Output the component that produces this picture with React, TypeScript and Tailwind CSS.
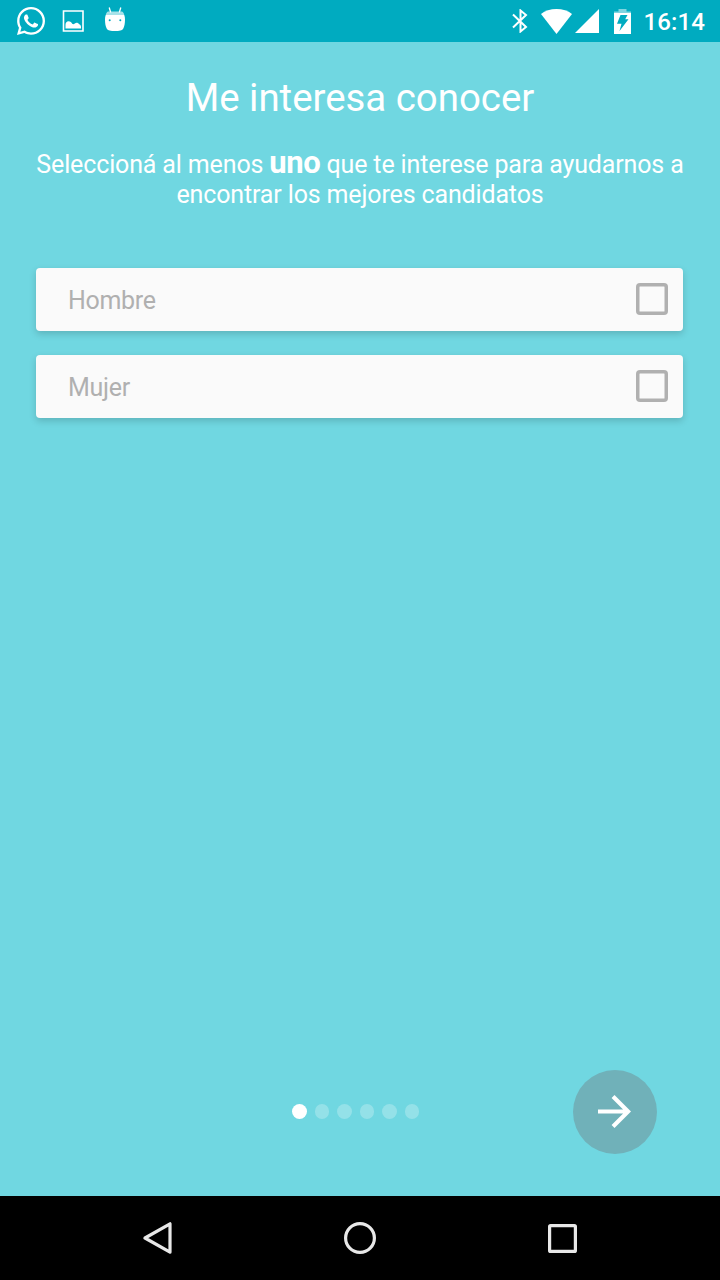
import React, { useState } from "react";
import { FaWhatsapp } from "react-icons/fa";

const options = ["Hombre", "Mujer"];
const steps = [0, 1, 2, 3, 4, 5];

function StatusBar() {
  return (
    <header className="flex h-[42px] shrink-0 items-center justify-between bg-[#00abc0] text-white">
      <div className="flex h-full items-center pl-[15px]">
        <FaWhatsapp className="h-8 w-8" />
        <svg className="ml-[15px] h-[22px] w-[22px]" viewBox="0 0 22 22" fill="currentColor">
          <path d="M1.500 1h19.500v20H1.500z" fill="none" stroke="currentColor" strokeWidth="1.600" />
          <path d="M3.500 18.500v-3.700c0-2.200 1.300-3.500 3-3.500 1.900 0 3 1 3.700 2.400.9.800 1.700.5 2.600-.2 1.600-1.200 3.500-.6 4.300.8 1.200.3 1.900 1.300 1.900 2.600v1.600z" />
        </svg>
        <svg className="mb-1 ml-[21px] h-6 w-5" viewBox="0 0 20 24" fill="currentColor">
          <path d="m4.200.5 1.500 5M15.800.5l-1.500 5" fill="none" stroke="currentColor" strokeWidth="1.300" />
          <path d="M3 4.500h14c1.200.6 2 2 2.300 4H.7c.3-2 1.100-3.400 2.300-4z" opacity=".65" />
          <path
            fillRule="evenodd"
            d="M.8 8h18.400c.6 1.300.8 2.700.8 4.500 0 4-.6 7-1.700 9-.9 1.900-4.300 2.500-8.300 2.500s-7.400-.6-8.300-2.500C.6 19.500 0 16.500 0 12.500 0 10.700.2 9.300.8 8zM4.700 12.300a1 1 0 1 0 0 2 1 1 0 0 0 0-2zM15.300 12.300a1 1 0 1 0 0 2 1 1 0 0 0 0-2z"
          />
        </svg>
      </div>
      <div className="flex h-full items-center pr-[15px]">
        <svg className="h-6 w-4" viewBox="0 0 16 24" fill="none" stroke="currentColor" strokeWidth="2">
          <path d="m1 5.500 13 12.500-5.500 4.500v-21L14 6 1 18.500" />
        </svg>
        <svg className="ml-[13px] h-[25px] w-[31px]" viewBox="0 0 31 25" fill="currentColor">
          <path d="M15.500 25 0 5C4 1.800 9.500 0 15.500 0S27 1.800 31 5z" />
        </svg>
        <svg className="ml-[3px] h-6 w-6" viewBox="0 0 24 24" fill="currentColor">
          <path d="M0 24h24V0z" />
        </svg>
        <svg className="ml-[15px] h-[25px] w-[17px]" viewBox="0 0 17 25" fill="currentColor">
          <path d="M4.500 0h8v2.500H17v2H0v-2h4.500z" opacity=".5" />
          <path fillRule="evenodd" d="M0 4h17v21H0zM6.500 6h7l-2.300 4.300h3.300L5.500 22l2-7.300H3z" />
        </svg>
        <span className="ml-[13px] pt-px text-[24px] leading-none font-medium tracking-[0.1px]">16:14</span>
      </div>
    </header>
  );
}

export default function App() {
  const [selected, setSelected] = useState<string[]>([]);
  const toggle = (name: string) =>
    setSelected((s) => (s.includes(name) ? s.filter((n) => n !== name) : [...s, name]));

  return (
    <div className="flex h-[1280px] w-[720px] flex-col overflow-hidden bg-[#70d7e1] font-['Roboto',sans-serif]">
      <StatusBar />
      <main className="flex flex-1 flex-col px-9 pt-[33px] text-white">
        <h1 className="text-center text-[38.4px] leading-[46px]">Me interesa conocer</h1>
        <p className="mt-[26px] h-[60px] text-center text-[25px] leading-[30px] tracking-[-0.14px] whitespace-nowrap">
          Seleccioná al menos <b className="text-[31px] leading-none font-bold tracking-[-0.4px]">uno</b> que te interese
          para ayudarnos a
          <br />
          encontrar los mejores candidatos
        </p>
        <div className="mt-[61px] flex flex-col gap-6">
          {options.map((name) => (
            <label
              key={name}
              className="flex h-[63px] w-[647px] items-center justify-between rounded-[4px] bg-[#fafafa] pr-[15px] pl-8 text-[25px] tracking-[-0.3px] text-[#b0b0b0] shadow-[0_3px_7px_rgba(0,0,0,0.17)]"
            >
              <span className="pt-[2px]">{name}</span>
              <input
                type="checkbox"
                checked={selected.includes(name)}
                onChange={() => toggle(name)}
                className="mb-px h-8 w-8 appearance-none rounded-[4px] shadow-[inset_0_0_0_3.5px_#b0b0b0] checked:bg-[#b0b0b0]"
              />
            </label>
          ))}
        </div>
        <footer className="mt-auto mb-[42px] grid grid-cols-[256px_1fr_84px] items-center pr-[27px]">
          <div className="col-start-2 flex gap-2 pb-px">
            {steps.map((i) => (
              <span
                key={i}
                className={i === 0 ? "h-[14.5px] w-[14.5px] rounded-full bg-white" : "h-[14.5px] w-[14.5px] rounded-full bg-white/25"}
              />
            ))}
          </div>
          <button className="flex h-[84px] w-[84px] items-center justify-center rounded-full bg-[#70b1b9] pr-px pb-px">
            <svg className="h-[33px] w-[33px]" viewBox="4 4 16 16" fill="currentColor">
              <path d="m12 4-1.410 1.410L16.170 11H4v2h12.170l-5.580 5.590L12 20l8-8z" />
            </svg>
          </button>
        </footer>
      </main>
      <nav className="flex h-[84px] shrink-0 items-center bg-black pl-[143px] text-[#e8e8e8]">
        <svg className="h-8 w-[30px]" viewBox="0 0 30 32" fill="none" stroke="currentColor" strokeWidth="3.200" strokeLinejoin="round">
          <path d="M27 1.800v28.400L2 16z" />
        </svg>
        <svg className="ml-[171px] h-8 w-8" viewBox="0 0 32 32" fill="none" stroke="currentColor" strokeWidth="3.200">
          <circle cx="16" cy="16" r="14.400" />
        </svg>
        <svg className="ml-[172px] h-[29px] w-[29px]" viewBox="0 0 29 29" fill="none" stroke="currentColor" strokeWidth="3.200">
          <rect x="1.600" y="1.600" width="25.800" height="25.800" rx="1" />
        </svg>
      </nav>
    </div>
  );
}
